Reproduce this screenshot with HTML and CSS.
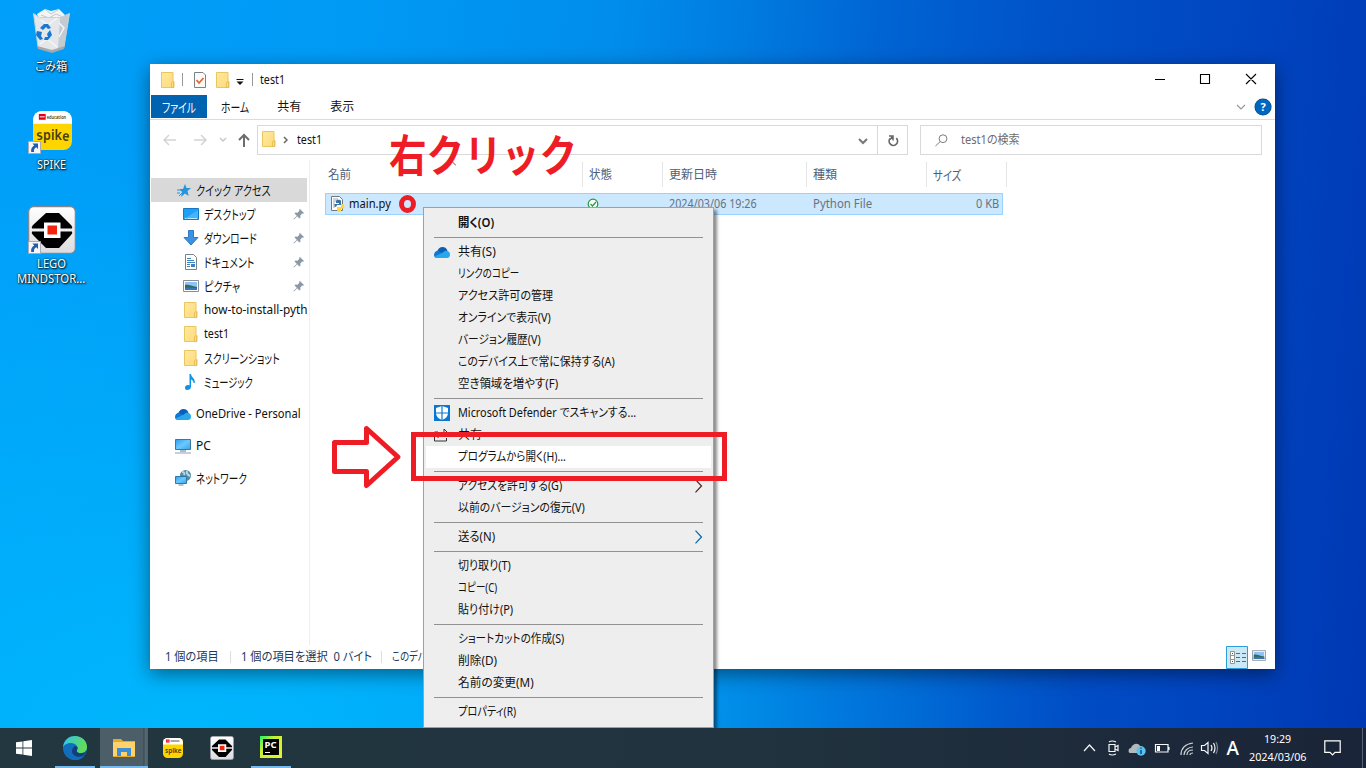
FILE: index.html
```html
<!DOCTYPE html>
<html lang="ja">
<head>
<meta charset="utf-8">
<title>test1</title>
<link rel="stylesheet" href="styles.css">
</head>
<body>
<svg class="defs" width="0" height="0">
  <defs>
    <linearGradient id="gf" x2="1" y2="1"><stop stop-color="#ffe9a0"/><stop offset="1" stop-color="#ffda78"/></linearGradient>
    <linearGradient id="gb" x2="1" y2="1"><stop stop-color="#2f9df0"/><stop offset=".5" stop-color="#6cc8ff"/><stop offset="1" stop-color="#30a5ee"/></linearGradient>
    <linearGradient id="gl" x2="0" y2="1"><stop stop-color="#fff"/><stop offset="1" stop-color="#dcdce0"/></linearGradient>
    <linearGradient id="ge" x1="0" y1="0" x2="1" y2=".3"><stop stop-color="#2dc3f5"/><stop offset="1" stop-color="#62dc55"/></linearGradient>
    <linearGradient id="gp" x2="1" y2="1"><stop stop-color="#21f36b"/><stop offset=".35" stop-color="#c6ef35"/><stop offset="1" stop-color="#eaf22c"/></linearGradient>
  </defs>
  <symbol id="folder" viewBox="0 0 14 16"><path d="M.5.5h11.500v9h1v6H.5z" fill="url(#gf)" stroke="#e9c75f"/><path d="M10.500 15.500v-5l2-1v6z" fill="#ffe08a" stroke="#e2b94a" stroke-width=".8"/></symbol>
  <symbol id="cloud" viewBox="0 0 16 11"><path d="M3 5C4 1.500 6 0 8.500 0s4.300 1.600 5 4l-5 3z" fill="#0a5fb8"/><path d="M0 8c0-2.500 2-4.300 4-4.200L10 7l-7 4C1.200 11 0 9.800 0 8z" fill="#0f78d4"/><path d="M9 5.500c1-1.500 3.500-2.200 5-1.300 1.300.5 2 1.800 2 3.500 0 1.800-1 3.300-3 3.300H3c-1 0-2-.6-2.600-1.500z" fill="#28a8ea"/></symbol>
  <symbol id="pin" viewBox="0 0 12 12"><path d="M6.700.8 11 5.100l-1 .7-.8-.2-1.900 1.900.1 2.200-.9.800-2.300-2.300L1 11.500l-.5-.5 3.300-3.200L1.500 5.500l.8-.9 2.200.1 1.900-1.900-.2-.9z" fill="#8b98a6"/></symbol>
  <symbol id="picture" viewBox="0 0 16 12"><path d="M.5.500h15v11H.5z" fill="#fff" stroke="#8a8f96"/><path d="M2 2h12v8H2z" fill="#8dc4f5"/><path d="M2 5c3-1 6 1 12 2v3H2z" fill="#33685c"/><path d="M2 8c4-1 8 0 12 .3V10H2z" fill="#3976b8"/></symbol>
  <symbol id="chevR" viewBox="0 0 9 14"><path d="M1.500.7 7.500 7l-6 6.300" fill="none" stroke="currentColor" stroke-width="1.200"/></symbol>
  <symbol id="shortcut" viewBox="0 0 13 13"><path d="M.5.500h12v12H.5z" fill="#f4f6f8" stroke="#aab"/><path d="M4.500 2.500H10V8L8.300 6.300C6.500 7 5.700 8.500 6 11H3.200c-.5-3 .5-5.300 3-6.600z" fill="#235da9"/></symbol>
  <symbol id="spikebg" viewBox="0 0 40 40"><rect width="40" height="40" rx="9" fill="#ffd500"/><path d="M0 13V9a9 9 0 0 1 9-9h22a9 9 0 0 1 9 9v4z" fill="#fff"/><path d="M6 3h7v6H6z" fill="#e3001b"/><path d="M7 6h5" stroke="#fff"/></symbol>
  <symbol id="lego" viewBox="0 0 48 48"><rect x=".7" y=".7" width="46.600" height="46.600" rx="5" fill="url(#gl)" stroke="#84878d" stroke-width="1.200"/><path d="M18 7h13l12 12q2 2 1 3.500H4q-1-1.500 1-3.500zM4 25.500h40q1 1.500-1 3.500L31 42H18L5 29q-2-2-1-3.500z"/><path d="M16 16.500h16.500v15.500H16z" fill="#fff"/><path d="M19.500 19.500h9.500v9h-9.500z" fill="#f0250c"/></symbol>
</svg>

<main class="desktop">
  <div class="shortcuts">
    <div class="shortcut bin">
      <svg width="40" height="45" viewBox="0 0 40 45"><path d="m5 6 8-5 6 2 8-2 6 6-5 6H8z" fill="#f2f4f5"/><path d="m13 1 6 5 8-5M9 7l8 3 7-4 7 3" fill="none" stroke="#c1c7cc"/><path d="m1.500 5.500 6 4h21l9-4L32 39l-12 4-14-4z" fill="#e3e7ea" stroke="#c1d3dd"/><path d="m28 10 9-4-5 33-6 2z" fill="#c3cad0"/><path d="m9 12 7 5 9-7M8 36l7-5 10 8M27 15l5 5-5 9" stroke="#f4f6f7" stroke-width="1.500" fill="none"/><g fill="#1778d2"><path d="m8 20 4-4h4l3 4-3 1-2-2-3 3z"/><path d="m5 23 5 1-1 4 2 3-3 1-4-5z"/><path d="m18 22 2 5-4 5h-4l1-3h3l-1-3z"/></g><path d="m5 38 15 4 13-4-1 3-12 4-14-4z" fill="#a2aaad"/></svg>
      <span class="label"><span data-w="32">ごみ箱</span></span>
    </div>
    <div class="shortcut spike">
      <span class="art"><svg width="39" height="39" viewBox="0 0 40 40"><use href="#spikebg"/><text class="logo" x="14" y="8" font-size="5.500" textLength="20" lengthAdjust="spacingAndGlyphs">education</text><text class="logo" x="4" y="30" font-size="14" textLength="33" lengthAdjust="spacingAndGlyphs" rotate="-8 0 0 0 6">spike</text></svg><svg class="arrow" width="13" height="13"><use href="#shortcut"/></svg></span>
      <span class="label"><span data-w="29">SPIKE</span></span>
    </div>
    <div class="shortcut lego">
      <span class="art"><svg width="48" height="48"><use href="#lego"/></svg><svg class="arrow" width="13" height="13"><use href="#shortcut"/></svg></span>
      <span class="label"><span data-w="29">LEGO</span><br><span data-w="68">MINDSTOR...</span></span>
    </div>
  </div>

  <section class="window">
    <header class="titlebar">
      <svg width="14" height="16"><use href="#folder"/></svg><i class="bar b1"></i>
      <svg class="check" width="12" height="16" viewBox="0 0 12 16"><path d="M.5.500h8.500l2.500 2.500v12.500H.5z" fill="#fafafa" stroke="#7d8084"/><path d="m2.500 8 2.500 3 4.500-5" fill="none" stroke="#e8662c" stroke-width="1.800"/></svg>
      <svg class="f2" width="14" height="16"><use href="#folder"/></svg>
      <svg class="qat" width="8" height="6" viewBox="0 0 8 6"><path d="M.5.500h7" stroke="#111"/><path d="M.5 2.500h7L4 6z" fill="#111"/></svg><i class="bar b2"></i>
      <span data-w="25">test1</span>
      <svg class="winctl" width="102" height="12" viewBox="0 0 102 12"><path d="M0 6.500h10M45.500 1.500h9v9h-9zM91 1l10 10M101 1 91 11" fill="none" stroke="#000" stroke-width="1.100"/></svg>
    </header>
    <nav class="tabs">
      <span class="file"><span data-w="34">ファイル</span></span>
      <span class="tab home"><span data-w="28">ホーム</span></span><span class="tab share"><span data-w="24">共有</span></span><span class="tab"><span data-w="24">表示</span></span>
      <svg class="down" width="10" height="6" viewBox="0 0 10 6"><path d="m1 1 4 4 4-4" fill="none" stroke="#949aa1" stroke-width="1.200"/></svg><b class="help">?</b>
    </nav>
    <div class="address">
      <svg class="nav" width="90" height="14" viewBox="0 0 90 14"><g fill="none" stroke="#d4d4d4" stroke-width="1.500"><path d="M13 7H1.500M6 2 1 7l5 5M31 7h12M38 2l5 5-5 5"/><path d="m57 5 3 3 3-3" stroke="#c8c8c8"/><path d="M81 14V2M76 7l5-5 5 5" stroke="#6d6d6d" stroke-width="2"/></g></svg>
      <div class="path"><svg width="14" height="16"><use href="#folder"/></svg><svg class="crumb" width="5" height="8" viewBox="0 0 5 8"><path d="m1 1 3 3-3 3" fill="none" stroke="#666" stroke-width="1.500"/></svg><span data-w="25">test1</span>
      <svg class="drop" width="10" height="7" viewBox="0 0 10 7"><path d="m1 1 4 4 4-4" fill="none" stroke="#777" stroke-width="2"/></svg></div>
      <div class="reload"><svg width="12" height="13" viewBox="0 0 12 13"><path d="M9.300 4.200A4.200 4.200 0 1 1 3 4.600" fill="none" stroke="#666" stroke-width="1.700"/><path d="M2 2h4v4.500M6 2 3 5.500" fill="none" stroke="#666" stroke-width="1.500"/></svg></div>
      <div class="search"><svg width="13" height="13" viewBox="0 0 13 13"><path d="M.5 12 5 7.700" stroke="#7c7c7c"/><circle cx="8" cy="4.700" r="3.900" fill="none" stroke="#7c7c7c"/></svg><span data-w="59">test1の検索</span></div>
    </div>
    <div class="body">
      <aside class="tree">
        <div class="row quick"><svg width="14" height="13" viewBox="0 0 14 13"><path d="m8 0 1.500 4H14l-3.500 3 1.200 5L8 9.500 4 13l1-5-2.500-3H6z" fill="#2196df"/><path d="M0 6h4M0 9h3M2 12l3-3" stroke="#2e92d4"/></svg><span data-w="75">クイック アクセス</span></div>
        <div class="row sub"><svg width="16" height="12" viewBox="0 0 16 12"><path d="M.5.500h15v11H.5z" fill="#21a0f3" stroke="#1179c8"/><path d="M1 11 15 2v9z" fill="#42b5fc"/><path d="M2 10.500h1.500m1 0H14" stroke="#bfe7ff"/></svg><span data-w="52">デスクトップ</span><svg class="pin" width="12" height="12"><use href="#pin"/></svg></div>
        <div class="row sub"><svg width="16" height="16" viewBox="0 0 16 16"><path d="M5.500.500h5v7H15L8 15 1 7.500h4.500z" fill="#3d91e0" stroke="#2d7bc6"/></svg><span data-w="53">ダウンロード</span><svg class="pin" width="12" height="12"><use href="#pin"/></svg></div>
        <div class="row sub"><svg width="16" height="16" viewBox="0 0 16 16"><path d="M2.500.500h8l3 3v12h-11z" fill="#fff" stroke="#7a8188"/><path d="M4 4.500h4M4 6.500h7M4 8.500h8M4 10.500h3M4 12.500h3" stroke="#3d83bd"/><path d="M8 10h4v3H8z" fill="#3d83bd"/></svg><span data-w="50">ドキュメント</span><svg class="pin" width="12" height="12"><use href="#pin"/></svg></div>
        <div class="row sub"><svg width="16" height="12"><use href="#picture"/></svg><span data-w="36">ピクチャ</span><svg class="pin" width="12" height="12"><use href="#pin"/></svg></div>
        <div class="row sub"><svg width="16" height="16"><use href="#folder"/></svg><span data-w="104">how-to-install-pyth</span></div>
        <div class="row sub"><svg width="16" height="16"><use href="#folder"/></svg><span data-w="25">test1</span></div>
        <div class="row sub"><svg width="16" height="16"><use href="#folder"/></svg><span data-w="76">スクリーンショット</span></div>
        <div class="row sub"><svg width="16" height="16" viewBox="0 0 16 16"><path d="M6.500 0H8c.5 4 4.500 4 3.700 9h-1.200c0-2-1-3-2.500-3.500V13c0 2-1.800 3-3.800 3S2 14.800 2 13.500c0-2 2.500-3 4.500-2z" fill="#0f94e8"/></svg><span data-w="49">ミュージック</span></div>
        <div class="row top"><svg width="16" height="11"><use href="#cloud"/></svg><span data-w="105">OneDrive - Personal</span></div>
        <div class="row top"><svg width="16" height="15" viewBox="0 0 16 15"><path d="M.5.500h15v10H.5z" fill="url(#gb)" stroke="#3f7795"/><path d="M5 12h6" stroke="#5c7e96"/><path d="M0 14h16" stroke="#8fa0ae"/></svg><span data-w="15">PC</span></div>
        <div class="row top"><svg width="16" height="16" viewBox="0 0 16 16"><circle cx="10.500" cy="5.500" r="5.500" fill="#548aa9"/><path d="M7 2c2 0 3 1 2 3M12 1c-1 3 1 4 3 5" stroke="#b7d8de" stroke-width="2" fill="none"/><path d="M.5 6.500h11v7H.5z" fill="url(#gb)" stroke="#2d79a6"/><path d="M3.500 15h5" stroke="#688394"/></svg><span data-w="51">ネットワーク</span></div>
      </aside>
      <div class="files">
        <div class="heads"><span class="c1"><span data-w="23">名前</span></span><span class="c2"><span data-w="23">状態</span></span><span class="c3"><span data-w="48">更新日時</span></span><span class="c4"><span data-w="24">種類</span></span><span class="c5"><span data-w="28">サイズ</span></span></div>
        <div class="entry"><span class="c1"><svg width="14" height="16" viewBox="0 0 14 16"><path d="M.5.500h8l3 3v11H.5z" fill="#fff" stroke="#72797e"/><path d="M2 3h5M2 5h3M2 7h2M2 9h2M2 11h2" stroke="#a2aab0"/><path d="M3.500 10.500V8H8V7H5V5c0-1.800 5-1.800 5 0v4H6L5 11z" fill="#3673aa"/><path d="M6 14v-3h4V8h1.500c2.500 0 2.500 4.500 0 4.500H10V15c-1 1.300-4 .7-4-1z" fill="#ffd43b"/></svg><span data-w="42">main.py</span></span><span class="c2"><svg width="12" height="12" viewBox="0 0 12 12"><circle cx="6" cy="6" r="4.800" fill="#fff" stroke="#229a3b" stroke-width="1.200"/><path d="m3.500 6 2 2 3.500-4" fill="none" stroke="#229a3b" stroke-width="1.200"/></svg></span><span class="c3"><span data-w="88">2024/03/06 19:26</span></span><span class="c4"><span data-w="59">Python File</span></span><span class="c5"><span data-w="23">0 KB</span></span></div>
      </div>
    </div>
    <footer class="status"><span data-w="54">1 個の項目</span><i></i><span data-w="131">1 個の項目を選択&nbsp; 0 バイト</span><i></i><span data-w="35">このデバ</span>
      <div class="views"><svg width="22" height="23" viewBox="0 0 22 23"><path d="M.5.500h21v22H.5z" fill="#cbe8f6" stroke="#2d9cdb"/><path d="M4.500 5.500h4v12h-4zM4 9.500h5M4 13.500h5" fill="#fff" stroke="#949494"/><path d="M10 7.500h4m2 0h4m-10 4h4m2 0h4m-10 4h4m2 0h4" stroke="#666"/><path d="M6 7.500h1M6 15.500h1" stroke="#c11"/></svg><svg class="thumbs" width="14" height="11"><use href="#picture"/></svg></div>
    </footer>
  </section>

  <svg class="sortmark" width="8" height="5" viewBox="0 0 8 5"><path d="m0 4.500 4-4 4 4" fill="none" stroke="#555"/></svg>

  <div class="menu">
    <div class="item bold"><span data-w="36">開く(O)</span></div><hr>
    <div class="item"><svg width="16" height="11"><use href="#cloud"/></svg><span data-w="38">共有(S)</span></div>
    <div class="item"><span data-w="61">リンクのコピー</span></div>
    <div class="item"><span data-w="95">アクセス許可の管理</span></div>
    <div class="item"><span data-w="93">オンラインで表示(V)</span></div>
    <div class="item"><span data-w="83">バージョン履歴(V)</span></div>
    <div class="item"><span data-w="157">このデバイス上で常に保持する(A)</span></div>
    <div class="item"><span data-w="100">空き領域を増やす(F)</span></div><hr>
    <div class="item"><svg width="16" height="16" viewBox="0 0 16 16"><path d="M0 0h16v16H0z" fill="#0878d3"/><path d="M8 1 14 3v5q0 5-6 7-6-2-6-7V3z" fill="#fff"/><path d="M8 0v16M1 8h14" stroke="#0878d3" stroke-width="1.200"/></svg><span data-w="178">Microsoft Defender でスキャンする...</span></div>
    <div class="item"><svg width="16" height="15" viewBox="0 0 16 15"><path d="M4 4H.5v9h12v-3M4 10c0-3 3-5 6-5V1l4 4-4 4V6" fill="none" stroke="#333"/></svg><span data-w="24">共有</span></div>
    <div class="item hot"><span data-w="108">プログラムから開く(H)...</span></div><hr>
    <div class="item"><span data-w="104">アクセスを許可する(G)</span><svg class="more" width="9" height="14"><use href="#chevR"/></svg></div>
    <div class="item"><span data-w="127">以前のバージョンの復元(V)</span></div><hr>
    <div class="item"><span data-w="37">送る(N)</span><svg class="more send" width="9" height="14"><use href="#chevR"/></svg></div><hr>
    <div class="item"><span data-w="53">切り取り(T)</span></div>
    <div class="item"><span data-w="39">コピー(C)</span></div>
    <div class="item"><span data-w="55">貼り付け(P)</span></div><hr>
    <div class="item"><span data-w="106">ショートカットの作成(S)</span></div>
    <div class="item"><span data-w="39">削除(D)</span></div>
    <div class="item"><span data-w="76">名前の変更(M)</span></div><hr>
    <div class="item"><span data-w="58">プロパティ(R)</span></div>
  </div>

  <div class="callout"><span data-w="188">右クリック</span></div>
  <div class="ring"></div>
  <div class="frame"></div>
  <svg class="bigarrow" width="70" height="66" viewBox="0 0 70 66"><path d="M2.500 18.500H34.500V4.500L66 33 34.500 61.500V47.500H2.500z" fill="none" stroke="#ee1c24" stroke-width="5" stroke-linejoin="round"/></svg>
</main>

<footer class="taskbar">
  <div class="app start"><svg width="16" height="16" viewBox="0 0 16 16"><path d="m0 2.300 6.500-.9v6.200H0zM7.300 1.300 16 0v7.600H7.300zM0 8.400h6.500v6.200L0 13.700zM7.300 8.400H16V16l-8.700-1.300z" fill="#fff"/></svg></div>
  <div class="app edge"><svg width="24" height="24" viewBox="0 0 24 24"><circle cx="12" cy="12" r="12" fill="#1170bd"/><path d="M0 11C1 3 7 0 12 0c7 0 12 5 12 11 0 4-3 6-6 6-4 0-5-2-4-3 2-3-1-7-6-7-4 0-7 2-8 4z" fill="url(#ge)"/><path d="M1 11c4-5 9-3 11-1-3 0-4 3-3 6 1 4 7 6 12 4-5 6-13 5-17 0-2-2-3-5-3-9z" fill="#136dbd"/><path d="M9 16c0-3 1-5 3-6 3 0 3 3 2 4-1 2 2 4 5 3 2 0 3-1 4-2-1 3-2 4-3 5-5 2-10 0-11-4z" fill="#123f79"/></svg></div>
  <div class="app explorer"><svg width="22" height="19" viewBox="0 0 22 19"><path d="M0 1h8l2 2h12v16H0z" fill="#e8a92b"/><path d="M0 4h22v14H0z" fill="#ffd36a"/><path d="M4 18v-8h14v8h-4v-4H8v4z" fill="#3b8fd9"/></svg></div>
  <div class="app"><svg width="20" height="20" viewBox="0 0 40 40"><use href="#spikebg"/><path d="M15 6h18" stroke="#555" stroke-width="2"/><text class="logo" x="4" y="30" font-size="14" textLength="33" lengthAdjust="spacingAndGlyphs">spike</text></svg></div>
  <div class="app"><svg width="24" height="24" viewBox="0 0 48 48"><use href="#lego"/></svg></div>
  <div class="app pycharm"><svg width="22" height="22" viewBox="0 0 22 22"><path d="M0 0h22v22H0z" fill="url(#gp)"/><path d="M3 3h16v16H3z"/><path d="M5 16.500h5" stroke="#fff"/><text x="4.500" y="11.500" font-family="Noto Sans" font-size="8.500" font-weight="700" textLength="12" lengthAdjust="spacingAndGlyphs" fill="#fff">PC</text></svg></div>
  <div class="tray">
    <svg width="143" height="18" viewBox="0 0 143 18"><g fill="none" stroke="#f4f6f8" stroke-width="1.200"><path d="m1 12 5.500-6 5.500 6M26 5.500h6v7h-6zM32 8l3-1.500v5L32 10M26 3q3-2 7 0M26 15q3 2 7 0"/><path d="M72.500 5.500H85v7.500H72.500zM86 8v3"/><path d="M98 16C98 9 103 5 110 4M101 16c0-4 4-8 9-8M104 16c0-3 2-5 6-5M107 16c0-1 1-2 3-2" stroke="#ccd2d8"/><path d="M118.500 6.500h3l3.500-3v11l-3.500-3h-3zM128 6q2 3 0 6M130.500 4q3 5 0 10"/><path d="M133 3q3 6 0 12" stroke="#7d858f"/></g><path d="M74 7h3v5h-3z" fill="#fff"/><path d="M50 14h-3c-2 0-2-5 1-5 1-4 7-6 9-2 3 0 4 2 4 4v3z" fill="#b4b9bc"/><circle cx="58" cy="12" r="4.700" fill="#58c3f1"/><path d="M58 11v4M58 8.500v1.200" stroke="#104b70" stroke-width="1.500"/></svg>
    <span class="ime">A</span>
    <div class="clock"><span data-w="27">19:29</span><span data-w="58">2024/03/06</span></div>
    <svg class="note" width="17" height="16" viewBox="0 0 17 16"><path d="M.8.800h15.400v11.500H11l-2.500 2.500L6 12.300H.8z" fill="none" stroke="#fff" stroke-width="1.200"/></svg>
  </div>
</footer>
<script src="fit.js"></script>
</body>
</html>
```
FILE: styles.css
```css
* { box-sizing: border-box; }
body { margin: 0; width: 1366px; height: 768px; overflow: hidden; display: flex; flex-direction: column; font: 12px/16px "Noto Sans", "Noto Sans CJK JP", sans-serif; color: #111; font-feature-settings: "palt"; }
svg { display: block; flex: none; }
.defs { position: absolute; }
.art svg { overflow: visible; }
.logo { font-family: "Noto Sans", sans-serif; font-weight: 600; fill: #453d0c; text-shadow: none; }
[data-w] { display: inline-block; white-space: nowrap; transform-origin: 0 50%; flex: none; }
.kana { font-size: 13px; }
.desktop { position: relative; height: 728px; flex: none; background: radial-gradient(ellipse 900px 620px at 180px 760px, #00b7fd, rgba(0,176,253,0)), linear-gradient(95deg, #009ff9 0%, #009af5 25%, #008deb 43%, #007ce0 52%, #0064d3 62%, #0052c8 74%, #0045c0 88%, #0038b3 100%); }
.shortcuts { width: 103px; display: flex; flex-direction: column; padding-top: 8px; }
.shortcut { display: flex; flex-direction: column; align-items: center; color: #fff; text-align: center; text-shadow: 1px 1px 2px #000, 0 0 2px #000; line-height: 15px; }
.bin { height: 103px; }
.bin .label { margin-top: 6px; }
.spike { height: 95px; padding-left: 1px; }
.spike .label { margin-top: 7px; }
.lego .label { margin-top: 2px; }
.art { position: relative; }
.arrow { position: absolute; left: 0; bottom: 0; }
.spike .arrow { left: -5px; bottom: -4px; }

.window { position: absolute; left: 150px; top: 64px; width: 1125px; height: 605px; background: #fff; box-shadow: 0 5px 18px rgba(0,0,0,.45); display: flex; flex-direction: column; }
.titlebar { height: 31px; display: flex; align-items: center; padding-left: 11px; }
.bar { width: 1px; height: 13px; background: #999; }
.b1 { margin: 0 11px 0 7px; }
.f2 { margin-left: 10px; }
.qat { margin: 4px 7px 0 6px; }
.b2 { margin: 0 7px 0 1px; }
.winctl { margin: -2px 18px 0 auto; }
.tabs { height: 25px; display: flex; align-items: center; border-bottom: 1px solid #dadbdc; padding-left: 1px; }
.file { width: 56px; height: 23px; background: #0063b1; color: #fff; padding: 4px 0 0 11px; align-self: flex-start; }
.home { margin-left: 14px; }
.share { margin: 0 29px 0 28px; }
.down { margin-left: auto; }
.help { width: 16px; height: 16px; border-radius: 50%; background: #0067c0; box-shadow: 0 0 0 .5px #083d75; color: #fff; margin: 0 4px 0 9px; text-align: center; font-size: 11px; line-height: 16px; }
.address { height: 40px; flex: none; display: flex; align-items: center; padding-left: 13px; }
.nav { margin-right: 4px; }
.path, .reload, .search { height: 30px; border: 1px solid #d9d9d9; display: flex; align-items: center; }
.path { width: 621px; padding: 0 9px 0 4px; }
.path > svg:first-child { margin-bottom: 2px; }
.crumb { margin: 0 9px 0 7px; }
.drop { margin-left: auto; margin-top: 2px; }
.reload { width: 31px; margin-left: -1px; justify-content: center; }
.search { width: 342px; margin-left: 12px; padding-left: 14px; gap: 13px; color: #6d6d6d; }
.body { height: 485px; display: flex; }
.tree { width: 160px; border-right: 1px solid #eee; padding: 18px 2px 0 1px; }
.row { height: 24px; display: flex; align-items: center; gap: 5px; overflow: hidden; }
.quick { background: #d9d9d9; padding-left: 26px; }
.sub { padding-left: 32px; }
.pin { margin-left: auto; margin-right: 2px; }
.top { padding-left: 24px; margin-top: 8px; }
.files { padding: 2px 0 0 15px; }
.heads { display: grid; grid-template-columns: 258px 80px 144px 120px 80px; height: 25px; color: #4c607a; }
.heads > span { border-right: 1px solid #e5e5e5; padding: 5px 0 0 6px; }
.heads .c1 { padding-left: 3px; }
.entry { display: grid; grid-template-columns: 257px 80px 144px 120px 75px; height: 22px; margin-top: 6px; border: 1px solid #99d1ff; background: #cce8ff; color: #69727d; align-items: center; width: 678px; }
.entry > span { padding-left: 6px; display: flex; }
.entry .c1 { color: #111; gap: 4px; padding-left: 5px; }
.entry .c2 { padding-left: 4px; }
.entry .c5 { justify-content: flex-end; padding-right: 3px; }
.status { height: 24px; display: flex; align-items: center; padding-left: 15px; color: #213a5c; white-space: nowrap; }
.status i { width: 1px; height: 12px; background: #ddd; margin: 0 10px 0 11px; }
.status i + span + i { margin: 0 10px 0 9px; }
.views { margin-left: auto; margin-right: 9px; display: flex; align-items: center; gap: 4px; }
.thumbs { margin-bottom: 3px; }

.sortmark { position: absolute; left: 448px; top: 161px; }
.menu { position: absolute; left: 423px; top: 207px; width: 291px; height: 521px; padding: 4px 2px; background: #eee; border: 1px solid #a0a0a0; box-shadow: 3px 3px 3px rgba(0,0,0,.45); color: #111; z-index: 2; }
.item { height: 22px; padding-left: 32px; display: flex; align-items: center; position: relative; }
.bold { font-weight: 600; }
.hot { background: #fff; }
.item > svg:first-child { position: absolute; left: 8px; }
.more { margin-left: auto; margin-right: 8px; color: #502020; }
.send { color: #0067b0; }
hr { height: 1px; border: 0; background: #919191; margin: 3px 8px; }

.callout { position: absolute; left: 389px; top: 123px; color: #ee1c24; font: bold 44px/60px "Noto Sans CJK JP", sans-serif; z-index: 3; }
.callout .kana, .callout [data-w] { font-size: 44px; }
.ring { position: absolute; left: 399px; top: 195px; width: 17px; height: 18px; border: 5.500px solid #ee1c24; border-radius: 50%; z-index: 3; }
.frame { position: absolute; left: 411px; top: 432px; width: 316px; height: 49px; border: 5px solid #ee1c24; z-index: 3; }
.bigarrow { position: absolute; left: 332px; top: 424px; z-index: 3; }

.taskbar { position: relative; z-index: 5; height: 40px; display: flex; color: #fff; background: linear-gradient(90deg, #22373f, #21333f 55%, #1a2438); }
.app { width: 49px; display: flex; align-items: center; justify-content: center; }
.start { width: 48px; }
.edge { width: 40px; margin: 0 5px 0 7px; border-bottom: 2px solid #76b9ed; padding-top: 1px; }
.explorer { width: 48px; padding-right: 1px; background: linear-gradient(90deg, #4c5f69 43px, #34464f 44px, #596a73 45px, #4c5f69 48px); border-bottom: 2px solid #76b9ed; }
.pycharm { width: 40px; margin-left: 5px; border-bottom: 2px solid #76b9ed; }
.tray { margin-left: auto; display: flex; align-items: center; margin-right: 3px; padding-right: 21px; border-right: 1px solid #596273; }
.ime { font-size: 19px; font-weight: 500; line-height: 40px; margin-left: 1px; }
.clock { width: 76px; margin-left: 1px; display: flex; flex-direction: column; align-items: center; gap: 2px; font-size: 11px; }
.note { margin-left: 8px; }
```
FILE: fit.js
```js
// Condense each label to the advance width of the UI font.
document.fonts.ready.then(() => {
  document.querySelectorAll('[data-w]').forEach(el => {
    if (/^[ァ-ー\s]+$/.test(el.textContent)) el.classList.add('kana');
    const natural = el.offsetWidth, target = Number(el.dataset.w);
    el.style.transform = `scaleX(${target / natural})`;
    el.style.marginRight = `${target - natural}px`;
  });
});
```
